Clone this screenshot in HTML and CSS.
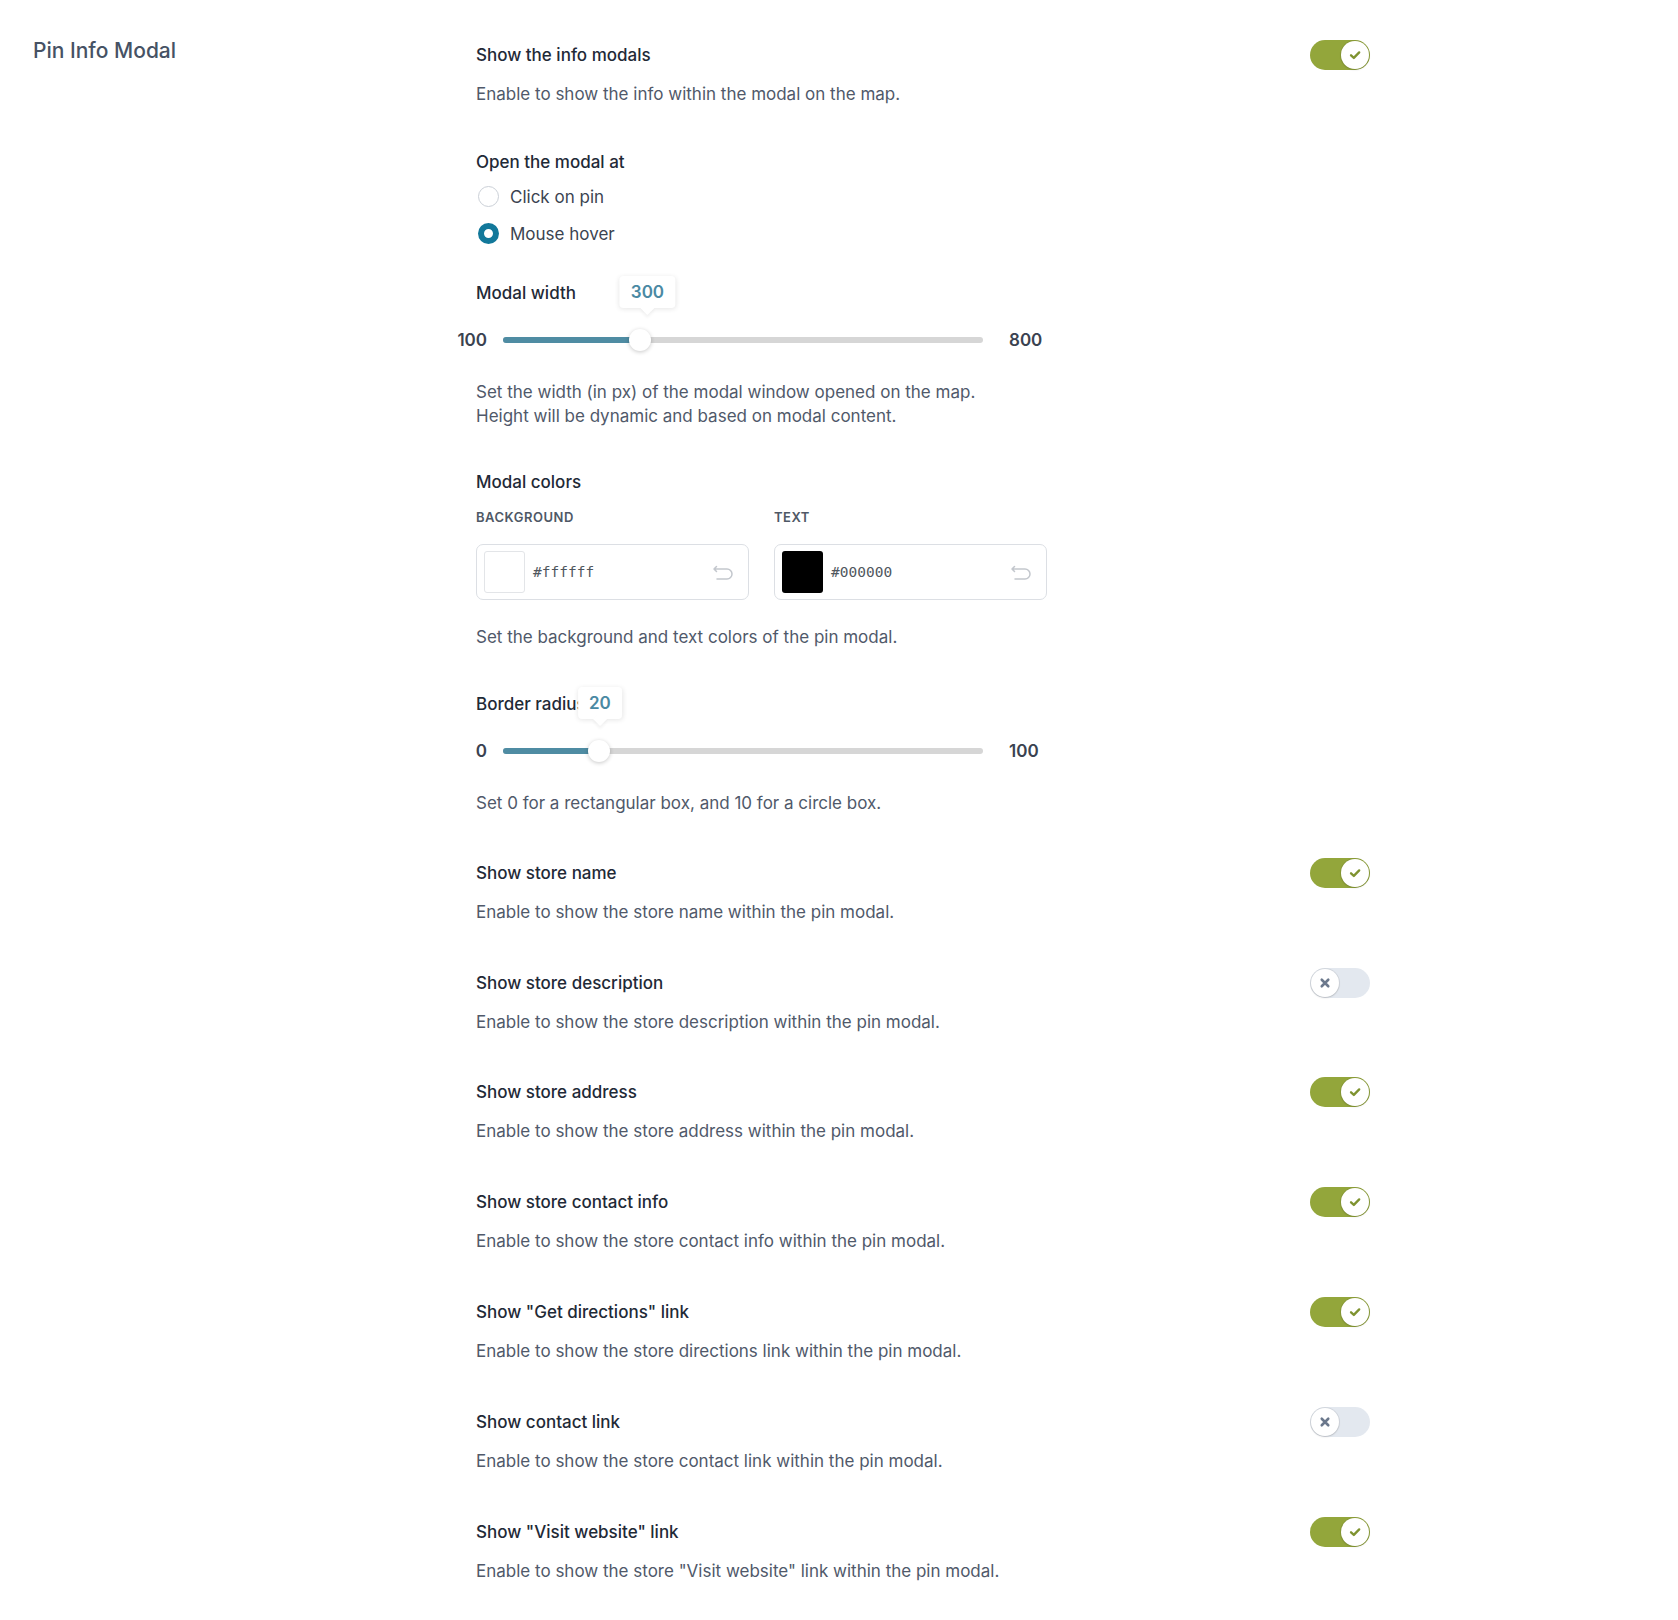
FILE: index.html
```html
<!DOCTYPE html>
<html lang="en">

<head>
    <title>Pin Info Modal</title>
    <meta charset="UTF-8">
    <meta name="viewport" content="width=device-width, initial-scale=1">

    <link rel="stylesheet" href="styles.css">
</head>

<body>
    <div class="settings">
        <div class="section-title">Pin Info Modal</div>

        <div class="fields">
            <div class="field">
                <div class="field-head">
                    <span class="field-label">Show the info modals</span>
                    <span class="toggle on"><span class="knob"><svg viewBox="0 0 12 12"><path d="M2.6 6.3 5 8.5 9.6 3.8"/></svg></span></span>
                </div>
                <p class="field-desc">Enable to show the info within the modal on the map.</p>
            </div>

            <div class="field field-choice">
                <div class="field-head field-head-text">
                    <span class="field-label">Open the modal at</span>
                </div>
                <div class="radio-list">
                    <label class="radio"><span class="radio-dot"></span>Click on pin</label>
                    <label class="radio"><span class="radio-dot checked"></span>Mouse hover</label>
                </div>
            </div>

            <div class="field field-range field-width">
                <div class="field-head field-head-text">
                    <span class="field-label">Modal width</span>
                </div>
                <div class="range">
                    <span class="range-min">100</span>
                    <div class="range-track">
                        <div class="range-fill" style="width: 28.57%"></div>
                        <div class="range-thumb" style="left: 28.57%"></div>
                        <div class="range-tip" style="left: 30.2%">300</div>
                    </div>
                    <span class="range-max">800</span>
                </div>
                <p class="field-desc field-desc-range">Set the width (in px) of the modal window opened on the map.<br>Height will be dynamic and based on modal content.</p>
            </div>

            <div class="field field-colors">
                <div class="field-head field-head-text">
                    <span class="field-label">Modal colors</span>
                </div>
                <div class="color-row">
                    <div class="color-field">
                        <div class="color-caption">Background</div>
                        <div class="color-input">
                            <span class="swatch swatch-white"></span>
                            <span class="color-hex">#ffffff</span>
                            <svg class="undo" viewBox="0 0 22 16"><path d="M4.5 2.5 2 5l2.5 2.5M2.5 5H15a5 5 0 0 1 0 10H5"/></svg>
                        </div>
                    </div>
                    <div class="color-field">
                        <div class="color-caption">Text</div>
                        <div class="color-input">
                            <span class="swatch swatch-black"></span>
                            <span class="color-hex">#000000</span>
                            <svg class="undo" viewBox="0 0 22 16"><path d="M4.5 2.5 2 5l2.5 2.5M2.5 5H15a5 5 0 0 1 0 10H5"/></svg>
                        </div>
                    </div>
                </div>
                <p class="field-desc field-desc-colors">Set the background and text colors of the pin modal.</p>
            </div>

            <div class="field field-range">
                <div class="field-head field-head-text">
                    <span class="field-label">Border radius</span>
                </div>
                <div class="range">
                    <span class="range-min">0</span>
                    <div class="range-track">
                        <div class="range-fill" style="width: 20%"></div>
                        <div class="range-thumb" style="left: 20%"></div>
                        <div class="range-tip" style="left: 20.3%">20</div>
                    </div>
                    <span class="range-max">100</span>
                </div>
                <p class="field-desc field-desc-range">Set 0 for a rectangular box, and 10 for a circle box.</p>
            </div>

            <div class="field">
                <div class="field-head">
                    <span class="field-label">Show store name</span>
                    <span class="toggle on"><span class="knob"><svg viewBox="0 0 12 12"><path d="M2.6 6.3 5 8.5 9.6 3.8"/></svg></span></span>
                </div>
                <p class="field-desc">Enable to show the store name within the pin modal.</p>
            </div>

            <div class="field">
                <div class="field-head">
                    <span class="field-label">Show store description</span>
                    <span class="toggle off"><span class="knob"><svg viewBox="0 0 12 12"><path d="M3.2 3.2 8.8 8.8M8.8 3.2 3.2 8.8"/></svg></span></span>
                </div>
                <p class="field-desc">Enable to show the store description within the pin modal.</p>
            </div>

            <div class="field">
                <div class="field-head">
                    <span class="field-label">Show store address</span>
                    <span class="toggle on"><span class="knob"><svg viewBox="0 0 12 12"><path d="M2.6 6.3 5 8.5 9.6 3.8"/></svg></span></span>
                </div>
                <p class="field-desc">Enable to show the store address within the pin modal.</p>
            </div>

            <div class="field">
                <div class="field-head">
                    <span class="field-label">Show store contact info</span>
                    <span class="toggle on"><span class="knob"><svg viewBox="0 0 12 12"><path d="M2.6 6.3 5 8.5 9.6 3.8"/></svg></span></span>
                </div>
                <p class="field-desc">Enable to show the store contact info within the pin modal.</p>
            </div>

            <div class="field">
                <div class="field-head">
                    <span class="field-label">Show "Get directions" link</span>
                    <span class="toggle on"><span class="knob"><svg viewBox="0 0 12 12"><path d="M2.6 6.3 5 8.5 9.6 3.8"/></svg></span></span>
                </div>
                <p class="field-desc">Enable to show the store directions link within the pin modal.</p>
            </div>

            <div class="field">
                <div class="field-head">
                    <span class="field-label">Show contact link</span>
                    <span class="toggle off"><span class="knob"><svg viewBox="0 0 12 12"><path d="M3.2 3.2 8.8 8.8M8.8 3.2 3.2 8.8"/></svg></span></span>
                </div>
                <p class="field-desc">Enable to show the store contact link within the pin modal.</p>
            </div>

            <div class="field">
                <div class="field-head">
                    <span class="field-label">Show "Visit website" link</span>
                    <span class="toggle on"><span class="knob"><svg viewBox="0 0 12 12"><path d="M2.6 6.3 5 8.5 9.6 3.8"/></svg></span></span>
                </div>
                <p class="field-desc">Enable to show the store "Visit website" link within the pin modal.</p>
            </div>
        </div>
    </div>
</body>

</html>
```

FILE: styles.css
```css
body {
    background-color: #fff;
    margin: 0;
    padding: 0;
    font-family: Inter, "Noto Sans", sans-serif;
    font-size: 17px;
    color: #1f2a37;
}

.settings {
    display: flex;
    padding: 40px 0 40px 33px;
}

.section-title {
    width: 443px;
    flex-shrink: 0;
    margin-top: -3px;
    font-size: 21px;
    line-height: 28px;
    font-weight: 500;
    color: #465264;
}

.fields {
    width: 894px;
}

.field {
    margin-bottom: 43.8px;
}

.field:last-child {
    margin-bottom: 0;
}

.field-choice {
    margin-bottom: 35px;
}

.field-range {
    margin-bottom: 43px;
}

.field-width {
    margin-bottom: 42px;
}

.field-colors {
    margin-bottom: 43px;
}

.field-head {
    display: flex;
    align-items: center;
    justify-content: space-between;
    min-height: 30px;
}

.field-head-text {
    min-height: 24px;
}

.field-label {
    font-weight: 500;
    line-height: 24px;
    color: #1f2a37;
}

.field-desc {
    margin: 12px 0 0;
    line-height: 24px;
    color: #50596a;
}

.field-desc-range {
    margin-top: 28px;
}

.field-desc-colors {
    margin-top: 25px;
}

/* toggles */
.toggle {
    display: flex;
    align-items: center;
    box-sizing: border-box;
    width: 60px;
    height: 30px;
    padding: 1px;
    border-radius: 15px;
}

.toggle.on {
    justify-content: flex-end;
    background-color: #93a63b;
}

.toggle.off {
    justify-content: flex-start;
    background-color: #e3e8ef;
}

.knob {
    display: flex;
    align-items: center;
    justify-content: center;
    width: 28px;
    height: 28px;
    border-radius: 50%;
    background-color: #fff;
    box-shadow: 0 0 0 1px rgba(0, 0, 0, 0.07), 0 1px 2px rgba(0, 0, 0, 0.12);
}

.knob svg {
    width: 14px;
    height: 14px;
    fill: none;
    stroke-width: 2;
    stroke-linecap: round;
    stroke-linejoin: round;
}

.toggle.on .knob svg {
    stroke: #7f9330;
}

.toggle.off .knob svg {
    stroke: #6b788c;
    stroke-width: 2.2;
}

/* radios */
.radio-list {
    display: flex;
    flex-direction: column;
    gap: 13px;
    margin-top: 11px;
}

.radio {
    display: flex;
    align-items: center;
    gap: 11px;
    height: 24px;
    color: #3b4451;
}

.radio-dot {
    box-sizing: border-box;
    width: 21px;
    height: 21px;
    margin-left: 2px;
    border: 1px solid #cbd0d7;
    border-radius: 50%;
    background-color: #fff;
}

.radio-dot.checked {
    border: 6.5px solid #12789a;
}

/* range sliders */
.range {
    display: flex;
    align-items: center;
    height: 24px;
    margin: 23px 0 0 -30px;
}

.range-min,
.range-max {
    font-weight: 600;
    color: #3a4250;
}

.range-min {
    width: 41px;
    text-align: right;
}

.range-track {
    position: relative;
    width: 480px;
    height: 6px;
    margin: 0 26.5px 0 15.5px;
    border-radius: 3px;
    background-color: #d6d6d6;
}

.range-fill {
    height: 100%;
    border-radius: 3px;
    background-color: #4f8ca3;
}

.range-thumb {
    position: absolute;
    top: 50%;
    width: 22px;
    height: 22px;
    border-radius: 50%;
    background-color: #fff;
    transform: translate(-50%, -50%);
    box-shadow: 0 1px 4px rgba(0, 0, 0, 0.22);
}

.range-tip {
    position: absolute;
    bottom: 35px;
    height: 32px;
    padding: 0 11px;
    line-height: 32px;
    border-radius: 4px;
    background-color: #fff;
    color: #4a89a3;
    font-weight: 600;
    transform: translateX(-50%);
    box-shadow: 0 1px 5px rgba(0, 0, 0, 0.1);
}

.range-tip::after {
    content: "";
    position: absolute;
    left: 50%;
    bottom: -5px;
    width: 10px;
    height: 10px;
    background-color: #fff;
    transform: translateX(-50%) rotate(45deg);
    box-shadow: 2px 2px 3px rgba(0, 0, 0, 0.05);
}

/* color pickers */
.color-row {
    display: flex;
    gap: 25px;
    margin-top: 15px;
}

.color-field {
    width: 273px;
}

.color-caption {
    margin-bottom: 19px;
    font-size: 13px;
    line-height: 16px;
    font-weight: 600;
    letter-spacing: 0.5px;
    text-transform: uppercase;
    color: #4f5866;
}

.color-input {
    display: flex;
    align-items: center;
    box-sizing: border-box;
    height: 56px;
    padding: 0 14px 0 7px;
    border: 1px solid #dcdfe4;
    border-radius: 7px;
}

.swatch {
    box-sizing: border-box;
    width: 41px;
    height: 42px;
    border-radius: 3px;
}

.swatch-white {
    border: 1px solid #e3e5e8;
    background-color: #fff;
}

.swatch-black {
    background-color: #000;
}

.color-hex {
    flex: 1;
    margin-left: 8px;
    font-family: "DejaVu Sans Mono", "Liberation Mono", monospace;
    font-size: 14.5px;
    color: #50575e;
}

.undo {
    width: 22px;
    height: 16px;
    fill: none;
    stroke: #c3c7cd;
    stroke-width: 1.5;
    stroke-linecap: round;
    stroke-linejoin: round;
}
```
